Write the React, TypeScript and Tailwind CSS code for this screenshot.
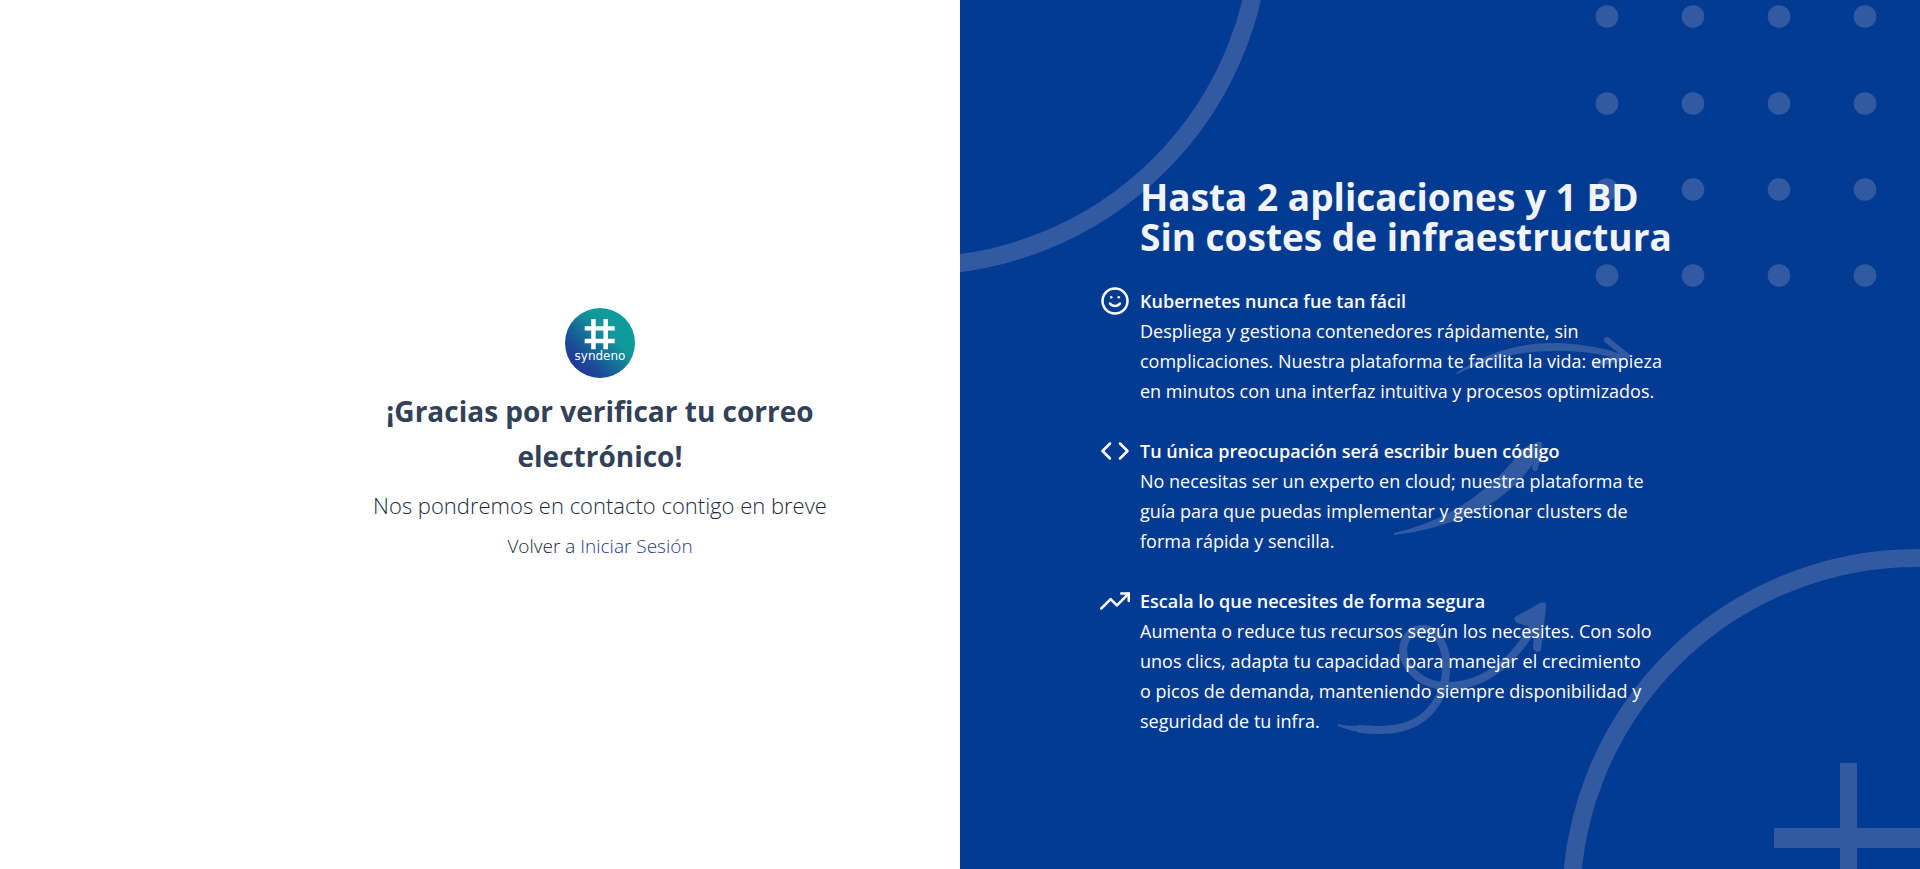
import type { ReactNode } from "react";
import { FiCode, FiSmile, FiTrendingUp } from "react-icons/fi";

interface Feature {
  icon: ReactNode;
  title: string;
  text: string;
}

const features: Feature[] = [
  {
    icon: <FiSmile className="size-[30px]" aria-hidden="true" />,
    title: "Kubernetes nunca fue tan fácil",
    text: "Despliega y gestiona contenedores rápidamente, sin complicaciones. Nuestra plataforma te facilita la vida: empieza en minutos con una interfaz intuitiva y procesos optimizados.",
  },
  {
    icon: <FiCode className="size-[30px]" aria-hidden="true" />,
    title: "Tu única preocupación será escribir buen código",
    text: "No necesitas ser un experto en cloud; nuestra plataforma te guía para que puedas implementar y gestionar clusters de forma rápida y sencilla.",
  },
  {
    icon: <FiTrendingUp className="size-[30px]" aria-hidden="true" />,
    title: "Escala lo que necesites de forma segura",
    text: "Aumenta o reduce tus recursos según los necesites. Con solo unos clics, adapta tu capacidad para manejar el crecimiento o\u00a0picos de demanda, manteniendo siempre disponibilidad y seguridad de tu infra.",
  },
];

const dotColumns = [647, 733, 819, 905];
const dotRows = [16, 103, 189, 275];

function Logo() {
  return (
    <svg viewBox="0 0 70 70" className="size-[70px]" role="img" aria-label="syndeno">
      <defs>
        <linearGradient id="logo-fill" x1="0.15" y1="0.85" x2="0.75" y2="0.25">
          <stop offset="0" stopColor="#1f3a98" />
          <stop offset="0.25" stopColor="#1b4d98" />
          <stop offset="0.8" stopColor="#109799" />
          <stop offset="1" stopColor="#0f9b9b" />
        </linearGradient>
      </defs>
      <circle cx="35" cy="35" r="35" fill="url(#logo-fill)" />
      <path
        d="M26.2 11h4.5v7.2h7.7V11h4.5v7.2h6.8v4.4h-6.8v8.2h6.8v4.4h-6.8v6.1h-4.5v-6.1h-7.7v6.1h-4.5v-6.1h-6.5v-4.4h6.5v-8.2h-6.5v-4.4h6.5zM30.7 22.6v8.2h7.7v-8.2z"
        fill="#fff"
        fillRule="evenodd"
      />
      <text
        x="35"
        y="52"
        textAnchor="middle"
        fill="#fff"
        className="font-['DejaVu_Sans',sans-serif] text-[12px]"
      >
        syndeno
      </text>
    </svg>
  );
}

function Backdrop() {
  return (
    <svg
      viewBox="0 0 960 869"
      preserveAspectRatio="xMidYMid slice"
      className="absolute inset-0 size-full text-[#315aa3]"
      aria-hidden="true"
    >
      <g fill="none" stroke="currentColor" strokeWidth="18">
        <circle cx="-45" cy="-80" r="346" />
        <circle cx="957" cy="904" r="346" />
      </g>
      <g fill="currentColor">
        {dotRows.map((y) =>
          dotColumns.map((x) => <circle key={`${x}-${y}`} cx={x} cy={y + 0.5} r="11.3" />),
        )}
        <path d="M880 763h17v65h63v20h-63v21h-17v-21h-66v-20h66z" />
        <path d="M496 373C530 350 565 342 598 343C622 344 645 348 664 355L660 360C640 353 620 351 598 351C565 350 530 358 497 374Z" />
        <path d="M434 533C490 520 530 490 557 456C558 452 563 448 570 445L578 442C582 441 583 443 582 447C572 473 540 504 503 518C476 528 452 533 434 535Z" />
        <path d="M555 617L580 603Q587 600 586 608L581 650Q577 655 573 648L574 629Q568 626 557 623Q553 620 555 617Z" />
      </g>
      <g fill="none" stroke="currentColor" strokeLinecap="round" strokeLinejoin="round">
        <path d="M647 340L667 356L636 364" strokeWidth="6" />
        <path d="M579 450L575 468" strokeWidth="6" />
        <path
          d="M400 729C432 732 453 728 468 713C491 689 489 655 480 640C471 625 452 625 445 641C437 661 457 685 486 686C528 687 558 655 575 624"
          strokeWidth="8"
        />
      </g>
      <path d="M378 724C390 727 402 725 414 726L412 733C400 733 388 730 378 726Z" fill="currentColor" />
    </svg>
  );
}

export default function App() {
  return (
    <main className="grid min-h-screen grid-cols-2 bg-white font-['Open_Sans','Noto_Sans',sans-serif]">
      <section className="flex items-center justify-end pr-[120px]">
        <div className="flex w-full max-w-[480px] flex-col items-center text-center text-slate-700">
          <Logo />
          <h1 className="mt-[11px] text-[28px] leading-[45px] font-bold">
            ¡Gracias por verificar tu correo electrónico!
          </h1>
          <p className="mt-2 text-[22px] leading-9 font-light text-slate-800">
            Nos pondremos en contacto contigo en breve
          </p>
          <p className="mt-2 text-[19px] leading-[30px] font-light text-slate-800">
            Volver a{" "}
            <a href="#login" className="text-blue-900">
              Iniciar Sesión
            </a>
          </p>
        </div>
      </section>

      <section className="relative flex flex-col justify-center overflow-hidden bg-[#043b92] pt-[43px] pl-[140px] text-white">
        <Backdrop />
        <div className="relative flex max-w-[580px] flex-col gap-[29px]">
          <h2 className="pl-10 text-[37px] leading-10 font-bold whitespace-nowrap text-slate-100">
            Hasta 2 aplicaciones y 1 BD
            <br />
            Sin costes de infraestructura
          </h2>
          <ul className="flex flex-col gap-[30px]">
            {features.map((feature) => (
              <li key={feature.title} className="flex gap-2.5">
                <span className="shrink-0">{feature.icon}</span>
                <div className="max-w-[524px] text-[18px] leading-[30px]">
                  <h3 className="font-semibold">{feature.title}</h3>
                  <p>{feature.text}</p>
                </div>
              </li>
            ))}
          </ul>
        </div>
      </section>
    </main>
  );
}
